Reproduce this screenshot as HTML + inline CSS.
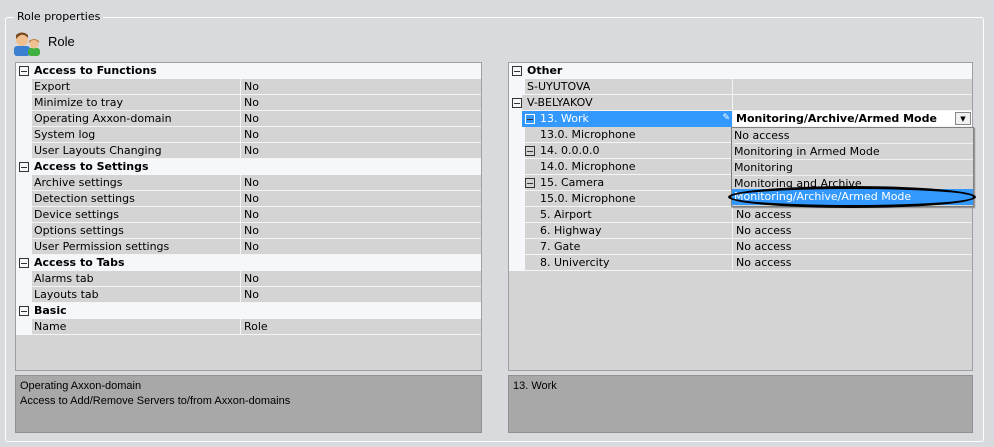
<!DOCTYPE html>
<html><head><style>
*{margin:0;padding:0;box-sizing:border-box}
body{width:994px;height:447px;background:#d9dade;font-family:"DejaVu Sans","Liberation Sans",sans-serif;font-size:11px;color:#000;position:relative;overflow:hidden}
.a{position:absolute}
.grid{position:absolute;background:#d4d4d4;border:1px solid #a0a0a0;overflow:hidden}
.r{position:absolute;left:0;right:0;height:16px;line-height:15px;white-space:nowrap}
.cat{background:#f6f7fb;font-weight:bold}
.prop{background:#d4d4d4;border-bottom:1px solid #f4f4f4}
.m{position:absolute;left:0;top:0;width:16px;height:16px;background:#f6f7fb}
.v{position:absolute;top:0;bottom:0;border-left:1px solid #f4f4f4;padding-left:3px}
.box{position:absolute;width:10px;height:10px;border:1px solid #333;top:3px;background:transparent}
.box:after{content:"";position:absolute;left:1px;top:4px;width:6px;height:1px;background:#333}
.desc{position:absolute;background:#a8a8a8;border:1px solid #909090;padding:3px 4px;line-height:15px;font-size:11px;font-family:"Liberation Sans Narrow","Liberation Sans",sans-serif}
</style></head><body>
<div class="a" style="left:5px;top:17px;width:979px;height:425px;border:1px solid #fff;border-radius:3px"></div>
<div class="a" style="left:14px;top:10px;background:#d9dade;padding:0 3px;font-size:11px">Role properties</div>
<svg class="a" style="left:14px;top:30px" width="28" height="26" viewBox="0 0 28 26">
<rect x="0" y="16" width="16" height="10" rx="3" fill="#3a7fd0"/>
<circle cx="8" cy="10" r="6" fill="#f0c090"/>
<path d="M2 9 Q8 1 14 8 L14 5 Q8 0 2 5Z" fill="#7a4a20"/>
<rect x="14" y="18" width="12" height="8" rx="3" fill="#40b040"/>
<circle cx="20" cy="14" r="4.5" fill="#f0c090"/>
<path d="M15 13 Q20 7 25 13 L25 11 Q20 7 15 11Z" fill="#c08040"/>
</svg>
<div class="a" style="left:48px;top:34px;font-size:13px;font-family:'Liberation Sans',sans-serif">Role</div>

<div class="grid" style="left:15px;top:62px;width:467px;height:309px">
<div class="r cat" style="top:0"><span class="box" style="left:3px"></span><span style="position:absolute;left:18px">Access to Functions</span></div>
<div class="r prop" style="top:16px"><div class="m"></div><span style="position:absolute;left:18px">Export</span><div class="v" style="left:224px">No</div></div>
<div class="r prop" style="top:32px"><div class="m"></div><span style="position:absolute;left:18px">Minimize to tray</span><div class="v" style="left:224px">No</div></div>
<div class="r prop" style="top:48px"><div class="m"></div><span style="position:absolute;left:18px">Operating Axxon-domain</span><div class="v" style="left:224px">No</div></div>
<div class="r prop" style="top:64px"><div class="m"></div><span style="position:absolute;left:18px">System log</span><div class="v" style="left:224px">No</div></div>
<div class="r prop" style="top:80px"><div class="m"></div><span style="position:absolute;left:18px">User Layouts Changing</span><div class="v" style="left:224px">No</div></div>
<div class="r cat" style="top:96px"><span class="box" style="left:3px"></span><span style="position:absolute;left:18px">Access to Settings</span></div>
<div class="r prop" style="top:112px"><div class="m"></div><span style="position:absolute;left:18px">Archive settings</span><div class="v" style="left:224px">No</div></div>
<div class="r prop" style="top:128px"><div class="m"></div><span style="position:absolute;left:18px">Detection settings</span><div class="v" style="left:224px">No</div></div>
<div class="r prop" style="top:144px"><div class="m"></div><span style="position:absolute;left:18px">Device settings</span><div class="v" style="left:224px">No</div></div>
<div class="r prop" style="top:160px"><div class="m"></div><span style="position:absolute;left:18px">Options settings</span><div class="v" style="left:224px">No</div></div>
<div class="r prop" style="top:176px"><div class="m"></div><span style="position:absolute;left:18px">User Permission settings</span><div class="v" style="left:224px">No</div></div>
<div class="r cat" style="top:192px"><span class="box" style="left:3px"></span><span style="position:absolute;left:18px">Access to Tabs</span></div>
<div class="r prop" style="top:208px"><div class="m"></div><span style="position:absolute;left:18px">Alarms tab</span><div class="v" style="left:224px">No</div></div>
<div class="r prop" style="top:224px"><div class="m"></div><span style="position:absolute;left:18px">Layouts tab</span><div class="v" style="left:224px">No</div></div>
<div class="r cat" style="top:240px"><span class="box" style="left:3px"></span><span style="position:absolute;left:18px">Basic</span></div>
<div class="r prop" style="top:256px"><div class="m"></div><span style="position:absolute;left:18px">Name</span><div class="v" style="left:224px">Role</div></div>
</div>
<div class="desc" style="left:15px;top:375px;width:467px;height:58px">Operating Axxon-domain<br>Access to Add/Remove Servers to/from Axxon-domains</div>

<div class="grid" style="left:508px;top:62px;width:465px;height:309px">
<div class="r cat" style="top:0"><span class="box" style="left:3px"></span><span style="position:absolute;left:18px">Other</span></div>
<div class="r prop" style="top:16px"><div class="m"></div><span style="position:absolute;left:18px">S-UYUTOVA</span><div class="v" style="left:223px"></div></div>
<div class="r prop" style="top:32px"><div class="m" style="width:13px"></div><span class="box" style="left:3px"></span><span style="position:absolute;left:18px">V-BELYAKOV</span><div class="v" style="left:223px"></div></div>
<div class="r prop" style="top:48px"><div class="m"></div><div style="position:absolute;left:13px;top:0;width:210px;height:16px;background:#3399ff;color:#fff"><span class="box" style="left:3px;border-color:#fff"></span><span style="position:absolute;left:18px">13. Work</span><span style="position:absolute;right:2px;top:0;font-size:9px">✎</span></div><div class="v" style="left:223px;background:#fff;font-weight:bold;right:0">Monitoring/Archive/Armed Mode<span style="position:absolute;right:1px;top:1px;width:16px;height:13px;border:1px solid #888;background:#f0f0f0;font-size:7px;text-align:center;line-height:12px">▼</span></div></div>
<div class="r prop" style="top:64px"><div class="m"></div><span style="position:absolute;left:31px">13.0. Microphone</span><div class="v" style="left:223px"></div></div>
<div class="r prop" style="top:80px"><div class="m"></div><span class="box" style="left:16px"></span><span style="position:absolute;left:31px">14. 0.0.0.0</span><div class="v" style="left:223px"></div></div>
<div class="r prop" style="top:96px"><div class="m"></div><span style="position:absolute;left:31px">14.0. Microphone</span><div class="v" style="left:223px"></div></div>
<div class="r prop" style="top:112px"><div class="m"></div><span class="box" style="left:16px"></span><span style="position:absolute;left:31px">15. Camera</span><div class="v" style="left:223px"></div></div>
<div class="r prop" style="top:128px"><div class="m"></div><span style="position:absolute;left:31px">15.0. Microphone</span><div class="v" style="left:223px"></div></div>
<div class="r prop" style="top:144px"><div class="m"></div><span style="position:absolute;left:31px">5. Airport</span><div class="v" style="left:223px">No access</div></div>
<div class="r prop" style="top:160px"><div class="m"></div><span style="position:absolute;left:31px">6. Highway</span><div class="v" style="left:223px">No access</div></div>
<div class="r prop" style="top:176px"><div class="m"></div><span style="position:absolute;left:31px">7. Gate</span><div class="v" style="left:223px">No access</div></div>
<div class="r prop" style="top:192px"><div class="m"></div><span style="position:absolute;left:31px">8. Univercity</span><div class="v" style="left:223px">No access</div></div>
</div>
<div class="a" style="left:731px;top:127px;width:243px;height:80px;background:#d4d4d4;border:1px solid #808080;box-shadow:1px 1px 1px #888;line-height:15px;padding-left:2px">
<div style="border-bottom:1px solid #f0f0f0">No access</div>
<div style="border-bottom:1px solid #f0f0f0">Monitoring in Armed Mode</div>
<div style="border-bottom:1px solid #f0f0f0">Monitoring</div>
<div style="height:13px;overflow:hidden">Monitoring and Archive</div>
<div style="background:#3399ff;color:#fff;margin-left:-2px;padding-left:2px;height:16px">Monitoring/Archive/Armed Mode</div>
</div>
<div class="a" style="left:728px;top:186px;width:248px;height:22px;border:3px solid #000;border-radius:50%/50%"></div>
<div class="desc" style="left:508px;top:375px;width:465px;height:58px">13. Work</div>
</body></html>
